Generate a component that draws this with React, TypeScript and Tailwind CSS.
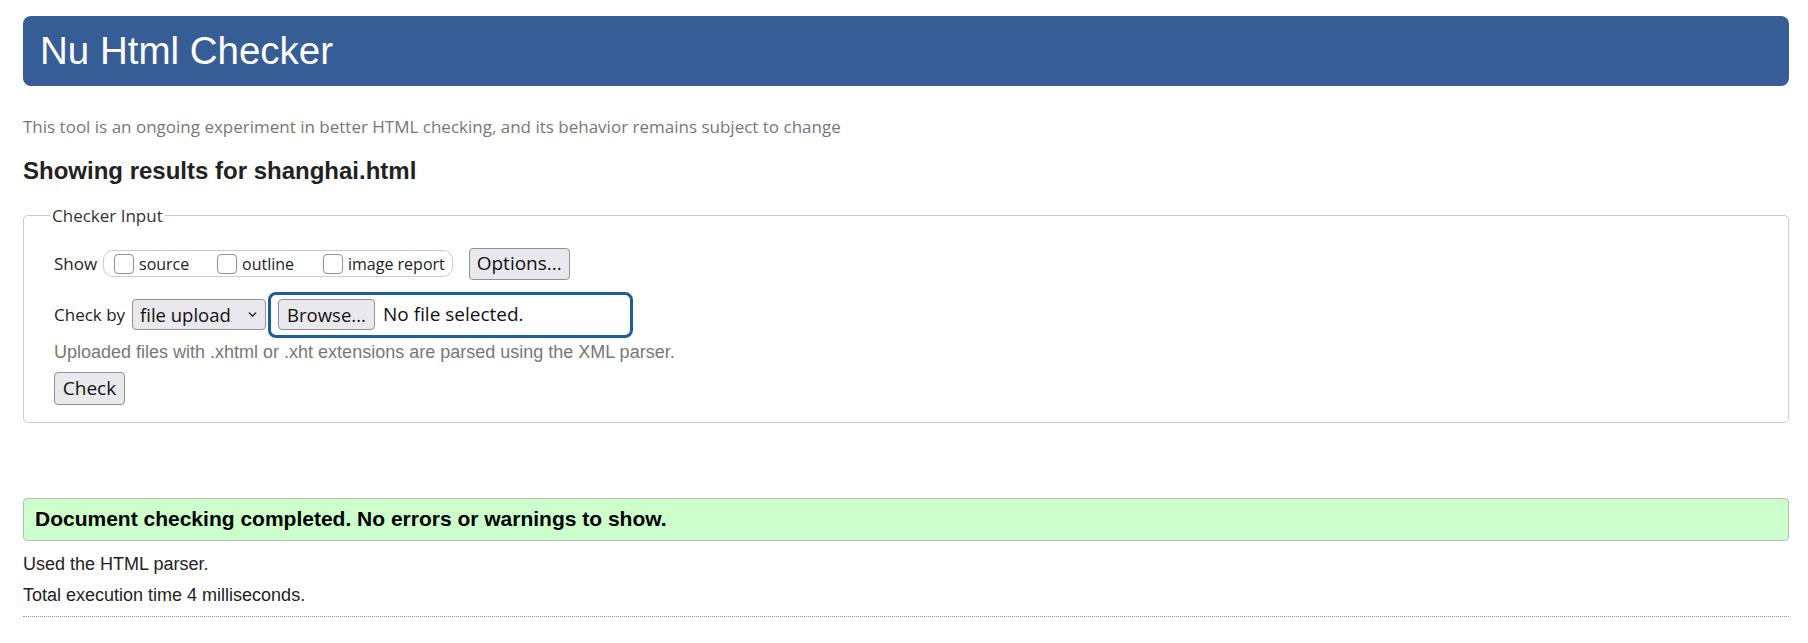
import { ChevronDown } from "lucide-react";

const uiFont = "font-['Open_Sans',sans-serif]";
const arial = "font-['Liberation_Sans',Arial,sans-serif]";

const ShowOption = ({ label, width }: { label: string; width: string }) => (
  <label className={`flex items-center whitespace-nowrap ${width}`}>
    <span className="w-[20px] h-[20px] shrink-0 rounded-[4px] border border-[#8f8f9d] bg-white" />
    <span className="ml-[5px] text-[16px] text-[#222]">{label}</span>
  </label>
);

const FormButton = ({
  children,
  className = "",
}: {
  children: React.ReactNode;
  className?: string;
}) => (
  <button
    type="button"
    className={`flex items-center justify-center whitespace-nowrap rounded-[4px] border border-[#8f8f9d] bg-[#e9e9ed] text-[#111] ${className}`}
  >
    {children}
  </button>
);

const App = () => {
  return (
    <div className={`min-h-screen bg-white pl-[23px] pr-[19px] pt-[16px] ${arial}`}>
      <header className="h-[70px] rounded-[8px] bg-[#365d95] flex items-center pl-[17px]">
        <h1 className={`text-[38.5px] text-white leading-none ${arial}`}>
          Nu Html Checker
        </h1>
      </header>

      <p className={`mt-[30px] text-[17px] text-[#777] leading-[22px] ${uiFont}`}>
        This tool is an ongoing experiment in better HTML checking, and its
        behavior remains subject to change
      </p>

      <h2 className="mt-[19px] text-[24px] font-bold text-[#222] leading-[28px]">
        Showing results for shanghai.html
      </h2>

      <fieldset className="mt-[18px] rounded-[5px] border border-[#ccc] pl-[30px] pr-[20px] pb-[17px] pt-[18px]">
        <legend className={`ml-[-4px] px-[2px] text-[17px] text-[#333] ${uiFont}`}>
          Checker Input
        </legend>

        <div className={`flex items-center h-[34px] ${uiFont}`}>
          <span className="text-[17px] text-[#222] w-[49px]">Show</span>
          <div className="flex items-center h-[27px] rounded-[10px] border border-[#ccc] pl-[10px] pr-[7px]">
            <ShowOption label="source" width="w-[103px]" />
            <ShowOption label="outline" width="w-[106px]" />
            <ShowOption label="image report" width="" />
          </div>
          <FormButton className="ml-[16px] w-[101px] h-[32px] text-[19px]">
            Options...
          </FormButton>
        </div>

        <div className={`flex items-center mt-[11px] h-[46px] ${uiFont}`}>
          <span className="text-[17px] text-[#222] w-[78px]">Check by</span>
          <FormButton className="w-[134px] h-[31px] text-[18.5px] justify-start pl-[7px]">
            <span>file upload</span>
            <ChevronDown className="ml-[15px] w-[13px] h-[13px]" strokeWidth={2.5} />
          </FormButton>
          <div className="ml-[2px] flex items-center h-[46px] w-[365px] rounded-[8px] border-[3px] border-[#1e5d9c] pl-[7px]">
            <FormButton className="w-[97px] h-[31px] text-[18.5px]">Browse...</FormButton>
            <span className="ml-[8px] text-[19px] text-[#111]">No file selected.</span>
          </div>
        </div>

        <p className="mt-[3px] text-[18px] text-[#777] leading-[22px]">
          Uploaded files with .xhtml or .xht extensions are parsed using the XML
          parser.
        </p>

        <FormButton className={`mt-[9px] w-[71px] h-[33px] text-[19px] ${uiFont}`}>
          Check
        </FormButton>
      </fieldset>

      <div className="mt-[75px] h-[43px] rounded-[4px] border border-[#bbb] bg-[#ccffcc] flex items-center pl-[11px]">
        <p className="text-[21px] font-bold text-black">
          Document checking completed. No errors or warnings to show.
        </p>
      </div>

      <p className="mt-[12px] text-[18px] text-[#222] leading-[22px]">
        Used the HTML parser.
      </p>
      <p className="mt-[9px] text-[18px] text-[#222] leading-[22px]">
        Total execution time 4 milliseconds.
      </p>
      <div className="mt-[10px] border-t border-dotted border-[#999]" />
    </div>
  );
};

export default App;
